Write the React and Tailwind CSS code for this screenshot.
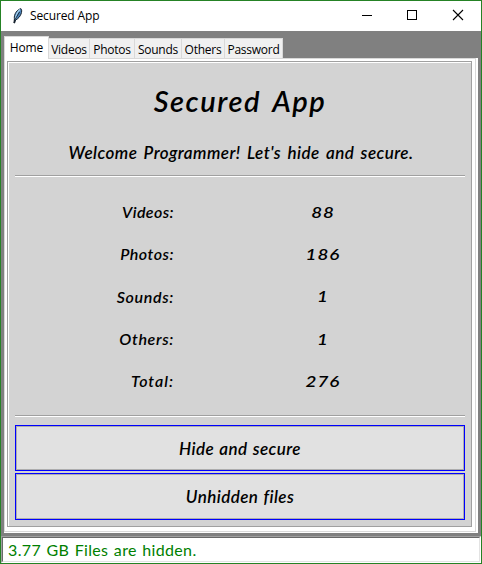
import React from "react";

const ink = "font-['Lato','Open_Sans',sans-serif] italic font-semibold whitespace-nowrap";

const stats = [
  { label: "Videos:", value: "88", ls: "tracking-[0.4px]", h: "h-[42px]" },
  { label: "Photos:", value: "186", ls: "tracking-[0.5px]", h: "h-[42px]" },
  { label: "Sounds:", value: "1", ls: "tracking-[0.65px]", h: "h-[43px]" },
  { label: "Others:", value: "1", ls: "tracking-[0.65px]", h: "h-[42px]" },
  { label: "Total:", value: "276", ls: "tracking-[1px]", h: "h-[42px]" },
];

const tabs = [
  { name: "Videos", w: "w-[41px]" },
  { name: "Photos", w: "w-[45px]" },
  { name: "Sounds", w: "w-[47px]" },
  { name: "Others", w: "w-[43px]" },
  { name: "Password", w: "w-[58px]" },
];

function TitleBar() {
  return (
    <div className="flex h-[30px] shrink-0 items-center bg-white">
      <svg className="ml-[9px] h-4 w-4" viewBox="0 0 16 16">
        <path d="M4 15 L4.4 11 C3.6 6 7.5 1.2 11 .7 C12.8 2.5 11 9.5 5.6 12 L4.6 15Z" fill="#4b83ba" stroke="#172431" strokeWidth="1" />
        <path d="M10 1.5 C7 4 6 7 5.3 11" fill="none" stroke="#a9d3ef" strokeWidth="1.2" />
        <path d="M9.5 4 L5 11.5 L4 15" fill="none" stroke="#101820" strokeWidth=".8" />
      </svg>
      <span className="ml-1 text-[12px] tracking-[-0.12px]">Secured App</span>
      <svg className="ml-auto h-[30px] w-[120px]" viewBox="0 0 120 30" shapeRendering="crispEdges" fill="none" stroke="#000">
        <path d="M1 14.5h10M46.5 9.5h9v9h-9z" />
        <path d="M92 9l10 10M102 9l-10 10" shapeRendering="auto" strokeWidth="1.1" />
      </svg>
    </div>
  );
}

function Separator() {
  return <div className="h-[2px] shrink-0 border-b border-white bg-[#a0a0a0]" />;
}

function ActionButton({ children, className }) {
  return (
    <button className={`flex w-full shrink-0 border border-[#0000ff] ${className}`}>
      <span className={`${ink} flex h-full w-full items-center justify-center border border-[#adadad] bg-[#e1e1e1] pt-px text-[17px] tracking-[0.4px] [word-spacing:1px]`}>
        {children}
      </span>
    </button>
  );
}

export default function App() {
  return (
    <div className="flex h-[564px] w-[482px] flex-col overflow-hidden border border-[#258225] bg-[#808080] font-['Open_Sans','Noto_Sans',sans-serif] text-black">
      <TitleBar />
      <div className="flex h-[505px] shrink-0 flex-col pl-[3px] pr-[3px] pt-[5px]">
        <div className="flex h-[22px] shrink-0 items-end text-[12px] leading-4">
          <div className="z-10 -mb-px flex h-[23px] w-[45px] items-center justify-center border border-b-0 border-[#d9d9d9] bg-white tracking-[-0.1px]">Home</div>
          {tabs.map((t) => (
            <div key={t.name} className={`flex h-[20px] items-center justify-center border-r border-t border-[#d9d9d9] bg-[#f0f0f0] pt-[3px] tracking-[-0.25px] ${t.w}`}>
              {t.name}
            </div>
          ))}
        </div>
        <div className="h-[475px] shrink-0 border-b border-r-2 border-white bg-white">
          <div className="h-[474px] border border-[#d9d9d9] bg-white pb-[4px] pl-[2px] pr-[3px] pt-[2px]">
            <div className="h-[466px] border border-[#a0a0a0] bg-[#d3d3d3]">
              <div className="flex h-full flex-col border-l border-t border-white pl-[6px] pr-[6px]">
                <h1 className={`${ink} mt-[19px] h-[40px] shrink-0 text-center text-[29px] leading-[38px] tracking-[1.5px] [word-spacing:4px]`}>Secured App</h1>
                <p className={`${ink} mt-[18px] h-[26px] shrink-0 pl-[2px] text-center text-[17px] leading-[26px] tracking-[0.45px] [word-spacing:2px]`}>Welcome Programmer! Let's hide and secure.</p>
                <div className="mt-[9px]"><Separator /></div>
                <div className="h-[238px] shrink-0 pt-[14px]">
                  {stats.map((s) => (
                    <div key={s.label} className={`${ink} flex items-center text-[16px] ${s.h}`}>
                      <span className={`w-[159px] text-right ${s.ls}`}>{s.label}</span>
                      <span className="ml-[98px] w-[102px] scale-x-125 text-center text-[15px] tracking-[0.8px]">{s.value}</span>
                    </div>
                  ))}
                </div>
                <Separator />
                <ActionButton className="mt-[8px] h-[46px]">Hide and secure</ActionButton>
                <ActionButton className="mt-[2px] h-[47px]">Unhidden files</ActionButton>
              </div>
            </div>
          </div>
        </div>
      </div>
      <div className="h-[27px] shrink-0 border-b border-l border-r border-t border-b-white border-l-[#a0a0a0] border-r-white border-t-[#a0a0a0]">
        <div className="flex h-full items-center whitespace-nowrap border border-b-[#e3e3e3] border-l-[#696969] border-r-[#e3e3e3] border-t-[#696969] bg-white pl-[5px] font-['Lato','Open_Sans',sans-serif] text-[16px] font-normal tracking-[0.35px] text-[#008000] [word-spacing:1px]">
          3.77 GB Files are hidden.
        </div>
      </div>
    </div>
  );
}
